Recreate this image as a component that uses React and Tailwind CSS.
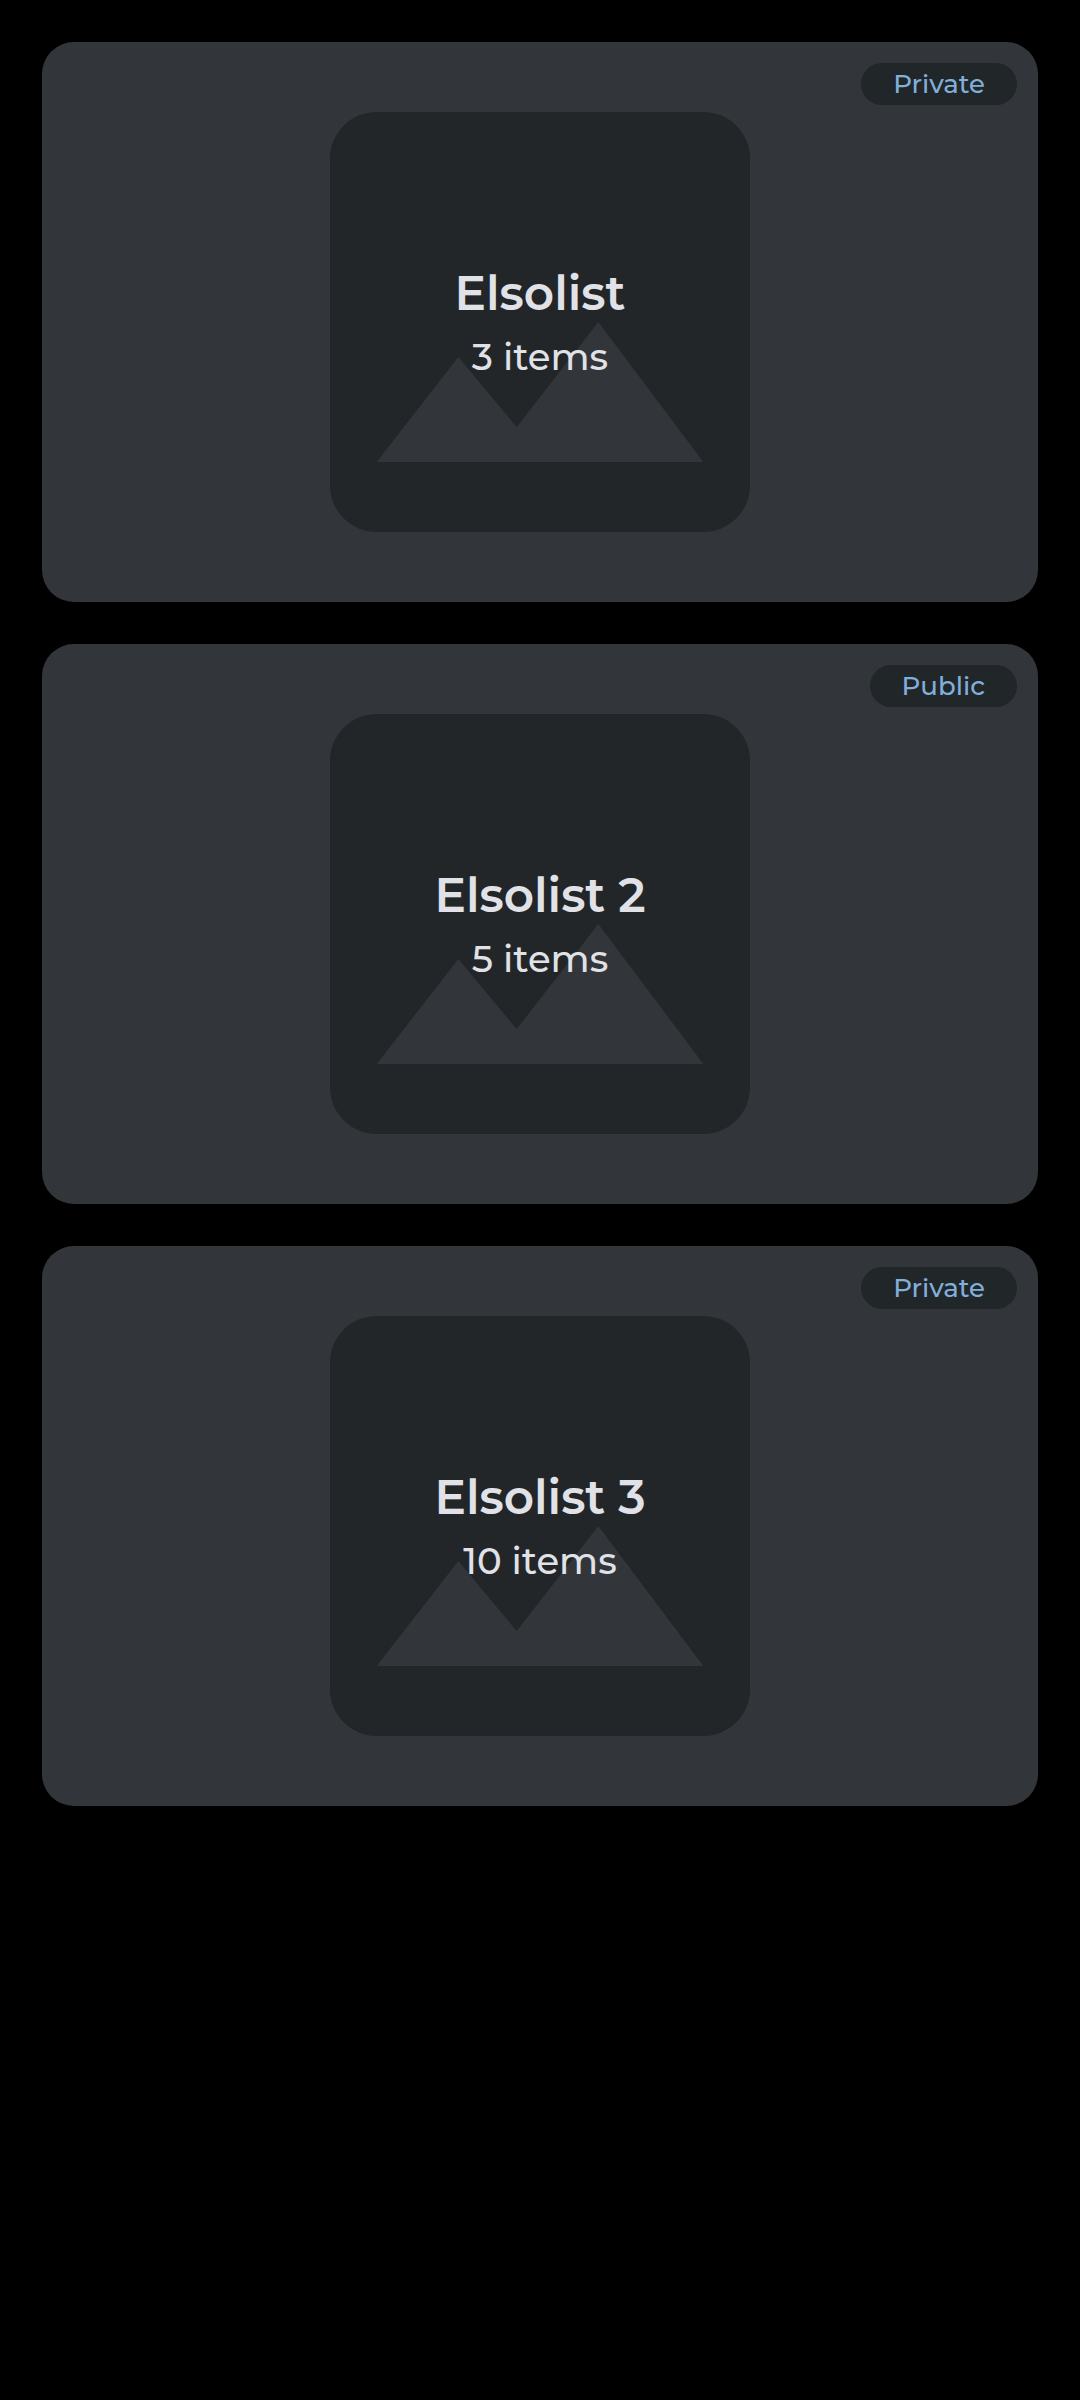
const lists = [
  { name: "Elsolist", count: 3, visibility: "Private" },
  { name: "Elsolist 2", count: 5, visibility: "Public" },
  { name: "Elsolist 3", count: 10, visibility: "Private" },
];

function Placeholder() {
  return (
    <svg viewBox="0 0 18 18" className="size-[420px]" aria-hidden="true">
      <rect width="18" height="18" rx="2" fill="#222629" />
      <path d="M2 15 5.5 10.5 8 13.5 11.5 9 16 15Z" fill="#323539" />
    </svg>
  );
}

function ListCard({ name, count, visibility }) {
  return (
    <li className="relative flex justify-center rounded-[32px] bg-[#323539] py-[70px]">
      <Placeholder />
      <div className="absolute inset-0 flex flex-col items-center justify-center pt-1.5 text-[#e1e2e8]">
        <h2 className="text-[47px] leading-[64px] font-semibold">{name}</h2>
        <p className="text-[37px] leading-[62px] font-medium">{count} items</p>
      </div>
      <span className="absolute top-[21px] right-[21px] rounded-full bg-[#212629] px-8 text-[26px] leading-[42px] font-medium text-[#82aeda]">
        {visibility}
      </span>
    </li>
  );
}

export default function App() {
  return (
    <main className="min-h-screen bg-black p-[42px] font-['Montserrat','Inter',sans-serif]">
      <ul className="flex flex-col gap-[42px]">
        {lists.map((list) => (
          <ListCard key={list.name} {...list} />
        ))}
      </ul>
    </main>
  );
}
